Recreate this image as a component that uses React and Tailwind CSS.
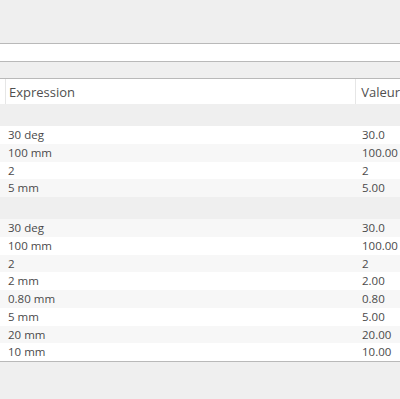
import React from "react";

const font = { fontFamily: '"Open Sans", "Noto Sans", "DejaVu Sans", sans-serif' };

function Row({ expr, val, alt }) {
  return (
    <div className={`flex h-[17.75px] items-center text-[11.5px] text-[#4a4a4a] ${alt ? "bg-[#f7f7f7]" : "bg-white"}`}>
      <div className="w-[357px] pl-[8px] leading-none">{expr}</div>
      <div className="flex-1 pl-[5px] leading-none">{val}</div>
    </div>
  );
}

function Group() {
  return <div className="h-[22px] bg-[#efefef]" />;
}

export default function App() {
  const g1 = [
    ["30 deg", "30.0"],
    ["100 mm", "100.00"],
    ["2", "2"],
    ["5 mm", "5.00"],
  ];
  const g2 = [
    ["30 deg", "30.0"],
    ["100 mm", "100.00"],
    ["2", "2"],
    ["2 mm", "2.00"],
    ["0.80 mm", "0.80"],
    ["5 mm", "5.00"],
    ["20 mm", "20.00"],
    ["10 mm", "10.00"],
  ];
  return (
    <div className="w-[400px] h-[399px] bg-[#efefef] overflow-hidden flex flex-col" style={font}>
      <div className="h-[43px] shrink-0" />
      <div className="h-[19px] shrink-0 bg-white border-y border-[#b9b9b9]" />
      <div className="h-[16px] shrink-0" />
      <div className="shrink-0 border-y border-[#b9b9b9] bg-white">
        <div className="flex h-[25px] bg-white text-[13px] text-[#4f4f4f]">
          <div className="w-[6px] border-r border-[#e6e6e6]" />
          <div className="w-[351px] border-r border-[#e6e6e6] pl-[3px] pt-[2px] flex items-center">Expression</div>
          <div className="flex-1 pl-[5px] pt-[2px] flex items-center">Valeur</div>
        </div>
        <Group />
        {g1.map((r, i) => (
          <Row key={"a" + i} expr={r[0]} val={r[1]} alt={i % 2 === 1} />
        ))}
        <Group />
        {g2.map((r, i) => (
          <Row key={"b" + i} expr={r[0]} val={r[1]} alt={i % 2 === 0} />
        ))}
      </div>
    </div>
  );
}
